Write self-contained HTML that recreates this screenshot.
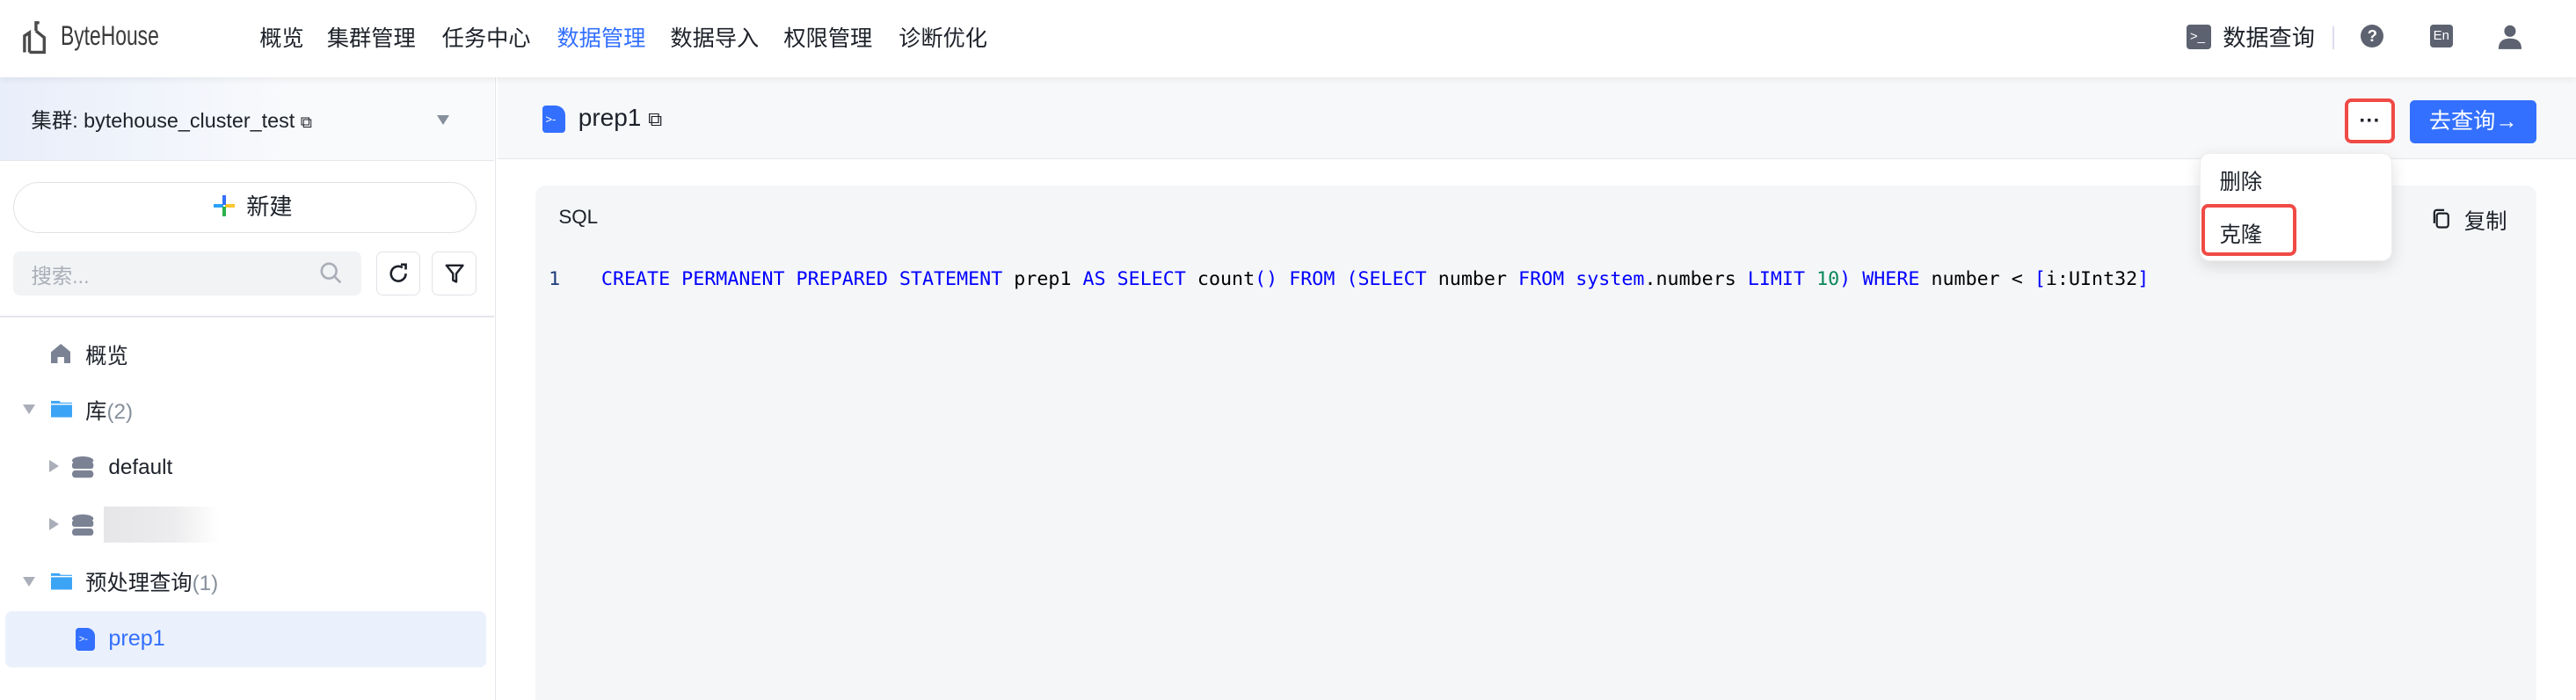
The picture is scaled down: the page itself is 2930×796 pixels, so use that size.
<!DOCTYPE html>
<html><head><meta charset="utf-8"><style>
*{box-sizing:border-box;margin:0;padding:0}
html,body{width:2930px;height:796px;overflow:hidden;background:#fff}
#root{width:1568px;height:426px;zoom:1.86862;position:relative;font-family:"Liberation Sans","Noto Sans CJK SC",sans-serif;color:#1d2129;font-size:13px;overflow:hidden}
.abs{position:absolute}
.hdr{left:0;top:0;width:1568px;height:47px;background:#fff;box-shadow:0 1px 4px rgba(0,0,0,.08);z-index:3}
.nav span{position:absolute;top:13px;font-size:13.5px;color:#1d2129}
.side{left:0;top:47px;width:302px;height:379px;background:#fff;border-right:1px solid #e5e6eb}
.main{left:303px;top:47px;width:1265px;height:379px;background:#fff}
.mono{font-family:"DejaVu Sans Mono","Liberation Mono",monospace}
.kw{color:#0000ff}.num{color:#098658}
.tree div{position:absolute;font-size:13px}
</style></head><body><div id="root">
<div class="abs hdr">
 <svg class="abs" style="left:14px;top:13px" width="22" height="20" viewBox="0 0 22 20"><path d="M1 19V9l3-2v12M4 19h9V10l-5-4M8 6V1h2" fill="none" stroke="#4a4a4a" stroke-width="1.8"/></svg>
 <div class="abs" style="left:37px;top:12px;font-size:17px;color:#3a3a3a;transform:scaleX(.72);transform-origin:left top;white-space:nowrap">ByteHouse</div>
 <div class="nav">
  <span style="left:158px">概览</span><span style="left:199px">集群管理</span><span style="left:269px">任务中心</span>
  <span style="left:339px;color:#3370ff">数据管理</span><span style="left:408px">数据导入</span><span style="left:477px">权限管理</span><span style="left:547px">诊断优化</span>
 </div>
 <div class="abs" style="left:1331px;top:15px;width:15px;height:15px;background:#5c6270;border-radius:2px;color:#fff;font-size:8px;line-height:15px;padding-left:2px">&gt;_</div>
 <div class="abs" style="left:1353px;top:12px;font-size:14px">数据查询</div>
 <div class="abs" style="left:1420px;top:16px;width:1px;height:14px;background:#dde"></div>
 <div class="abs" style="left:1437px;top:15px;width:14px;height:14px;border-radius:50%;background:#5c6270;color:#fff;font-size:10px;text-align:center;line-height:14px;font-weight:bold">?</div>
 <div class="abs" style="left:1479px;top:15px;width:14px;height:14px;border-radius:2px;background:#5c6270;color:#fff;font-size:8px;text-align:center;line-height:14px">En</div>
 <svg class="abs" style="left:1520px;top:14px" width="16" height="16" viewBox="0 0 16 16"><circle cx="8" cy="5" r="3.5" fill="#5c6270"/><path d="M1 16c0-5 3-6.5 7-6.5s7 1.5 7 6.5z" fill="#5c6270"/></svg>
</div>
<div class="abs side">
 <div class="abs" style="left:0;top:0;width:301px;height:51px;background:linear-gradient(90deg,#e8eefa,#f9fafc 60%);border-bottom:1px solid #e5e6eb"></div>
 <div class="abs" style="left:19px;top:16px;font-size:12.5px">集群: bytehouse_cluster_test <span style="font-size:10px">⧉</span></div>
 <div class="abs" style="left:266px;top:23px;width:0;height:0;border-left:4px solid transparent;border-right:4px solid transparent;border-top:6px solid #86909c"></div>
 <div class="abs" style="left:8px;top:64px;width:282px;height:31px;border:1px solid #e0e2e6;border-radius:16px;text-align:center;line-height:29px;font-size:14px;padding-left:10px"><span style="position:relative;display:inline-block;width:13px;height:13px;vertical-align:-1px;margin-right:7px"><i style="position:absolute;left:0;top:5.5px;width:6px;height:2px;background:#2aa1ff"></i><i style="position:absolute;left:7px;top:5.5px;width:6px;height:2px;background:#ffc52a"></i><i style="position:absolute;left:5.5px;top:0;width:2px;height:6px;background:#3370ff"></i><i style="position:absolute;left:5.5px;top:7px;width:2px;height:6px;background:#2bb24c"></i></span>新建</div>
 <div class="abs" style="left:8px;top:106px;width:212px;height:27px;background:#f2f3f5;border-radius:4px;color:#a9aeb8;padding:5px 11px;font-size:12.5px">搜索...</div>
 <svg class="abs" style="left:194px;top:112px" width="14" height="14" viewBox="0 0 14 14"><circle cx="6" cy="6" r="4.5" fill="none" stroke="#a9aeb8" stroke-width="1.4"/><path d="M9.5 9.5l3.5 3.5" stroke="#a9aeb8" stroke-width="1.4"/></svg>
 <div class="abs" style="left:229px;top:106px;width:27px;height:27px;border:1px solid #e0e2e6;border-radius:4px"></div>
 <svg class="abs" style="left:236px;top:113px" width="13" height="13" viewBox="0 0 13 13"><path d="M11 6.5A4.5 4.5 0 1 1 9 2.8" fill="none" stroke="#1d2129" stroke-width="1.4"/><path d="M8 1h3v3" fill="none" stroke="#1d2129" stroke-width="1.4"/></svg>
 <div class="abs" style="left:263px;top:106px;width:27px;height:27px;border:1px solid #e0e2e6;border-radius:4px"></div>
 <svg class="abs" style="left:270px;top:113px" width="13" height="13" viewBox="0 0 13 13"><path d="M1.5 1.5h10L7.5 6.5v5l-2-1v-4z" fill="none" stroke="#1d2129" stroke-width="1.3" stroke-linejoin="round"/></svg>
 <div class="abs" style="left:0;top:145px;width:301px;height:1px;background:#e5e6eb"></div>
 <div class="tree">
  <svg style="position:absolute;left:31px;top:162px" width="12" height="12" viewBox="0 0 12 12"><path d="M0 5L6 0l6 5v7H8V8H4v4H0z" fill="#7b8294"/></svg>
  <div style="left:52px;top:159px">概览</div>
  <div style="left:14px;top:199px;width:0;height:0;border-left:4px solid transparent;border-right:4px solid transparent;border-top:6px solid #a9aeb8"></div>
  <svg style="position:absolute;left:31px;top:196px" width="13" height="11" viewBox="0 0 13 11"><path d="M0 1h5l1 1h7v9H0z" fill="#3ca4f5"/><path d="M0 3h13" stroke="#fff" stroke-width=".8"/></svg>
  <div style="left:52px;top:193px">库<span style="color:#86909c">(2)</span></div>
  <div style="left:30px;top:233px;width:0;height:0;border-top:4px solid transparent;border-bottom:4px solid transparent;border-left:6px solid #a9aeb8"></div>
  <svg style="position:absolute;left:44px;top:231px" width="13" height="13" viewBox="0 0 13 13"><ellipse cx="6.5" cy="2.5" rx="6.5" ry="2.5" fill="#7b8294"/><rect x="0" y="3.5" width="13" height="4" rx="1.5" fill="#7b8294"/><rect x="0" y="8.5" width="13" height="4.5" rx="2" fill="#7b8294"/></svg>
  <div style="left:66px;top:230px">default</div>
  <div style="left:30px;top:268px;width:0;height:0;border-top:4px solid transparent;border-bottom:4px solid transparent;border-left:6px solid #a9aeb8"></div>
  <svg style="position:absolute;left:44px;top:266px" width="13" height="13" viewBox="0 0 13 13"><ellipse cx="6.5" cy="2.5" rx="6.5" ry="2.5" fill="#7b8294"/><rect x="0" y="3.5" width="13" height="4" rx="1.5" fill="#7b8294"/><rect x="0" y="8.5" width="13" height="4.5" rx="2" fill="#7b8294"/></svg>
  <div style="left:63px;top:261px;width:70px;height:22px;background:linear-gradient(90deg,#e6e6e8,#ececee 60%,#fff)"></div>
  <div style="left:14px;top:304px;width:0;height:0;border-left:4px solid transparent;border-right:4px solid transparent;border-top:6px solid #a9aeb8"></div>
  <svg style="position:absolute;left:31px;top:301px" width="13" height="11" viewBox="0 0 13 11"><path d="M0 1h5l1 1h7v9H0z" fill="#3ca4f5"/><path d="M0 3h13" stroke="#fff" stroke-width=".8"/></svg>
  <div style="left:52px;top:297px">预处理查询<span style="color:#86909c">(1)</span></div>
  <div style="left:3px;top:325px;width:293px;height:34px;background:#ebf1fc;border-radius:4px"></div>
  <div style="left:46px;top:335px;width:12px;height:14px;background:#3370ff;border-radius:2px 5px 2px 2px;color:#fff;font-size:6px;line-height:14px;padding-left:2px">&gt;-</div>
  <div style="left:66px;top:334px;color:#3370ff;font-size:13.5px">prep1</div>
 </div>
</div>
<div class="abs main">
 <div class="abs" style="left:0;top:0;width:1265px;height:50px;background:#f7f8fa;border-bottom:1px solid #e5e6eb"></div>
 <div class="abs" style="left:27px;top:17px;width:14px;height:17px;background:#3370ff;border-radius:2px 6px 2px 2px;color:#fff;font-size:7px;line-height:17px;padding-left:2px">&gt;-</div>
 <div class="abs" style="left:49px;top:16px;font-size:15px">prep1 <span style="font-size:12px">⧉</span></div>
 <div class="abs" style="left:1124px;top:13px;width:31px;height:27px;border:2.5px solid #f04a45;border-radius:4px;background:#fff;text-align:center;font-weight:bold;line-height:24px;font-size:13px">···</div>
 <div class="abs" style="left:1164px;top:14px;width:77px;height:26px;background:#3370ff;border-radius:3px;color:#fff;font-size:13.5px;line-height:26px;text-align:center">去查询→</div>
 <div class="abs" style="left:23px;top:66px;width:1218px;height:320px;background:#f5f6f8;border-radius:6px"></div>
 <div class="abs" style="left:37px;top:78px;font-size:12px">SQL</div>
 <svg class="abs" style="left:1178px;top:80px" width="11" height="12" viewBox="0 0 11 12"><rect x="2.5" y="3" width="7" height="8.5" rx="1.5" fill="none" stroke="#1d2129" stroke-width="1.2"/><path d="M1 9V2.5A1.5 1.5 0 0 1 2.5 1H7" fill="none" stroke="#1d2129" stroke-width="1.2"/></svg>
 <div class="abs" style="left:1197px;top:77px;font-size:13px">复制</div>
 <div class="abs mono" style="left:31px;top:116px;font-size:11.6px;color:#1e3a7a">1</div>
 <div class="abs mono" style="left:63px;top:116px;font-size:11.6px;white-space:pre;color:#000"><span class="kw">CREATE PERMANENT PREPARED STATEMENT</span> prep1 <span class="kw">AS SELECT</span> count<span class="kw">()</span> <span class="kw">FROM</span> <span class="kw">(SELECT</span> number <span class="kw">FROM</span> <span class="kw">system</span>.numbers <span class="kw">LIMIT</span> <span class="num">10</span><span class="kw">)</span> <span class="kw">WHERE</span> number &lt; <span class="kw">[</span>i:UInt32<span class="kw">]</span></div>
 <div class="abs" style="left:1036px;top:46px;width:117px;height:66px;background:#fff;border-radius:6px;box-shadow:0 3px 10px rgba(0,0,0,.12);border:1px solid #eee"></div>
 <div class="abs" style="left:1048px;top:53px;font-size:13px">删除</div>
 <div class="abs" style="left:1037px;top:77px;width:58px;height:32px;border:2.5px solid #f04a45;border-radius:4px"></div>
 <div class="abs" style="left:1048px;top:85px;font-size:13px">克隆</div>
</div>
</div></body></html>
